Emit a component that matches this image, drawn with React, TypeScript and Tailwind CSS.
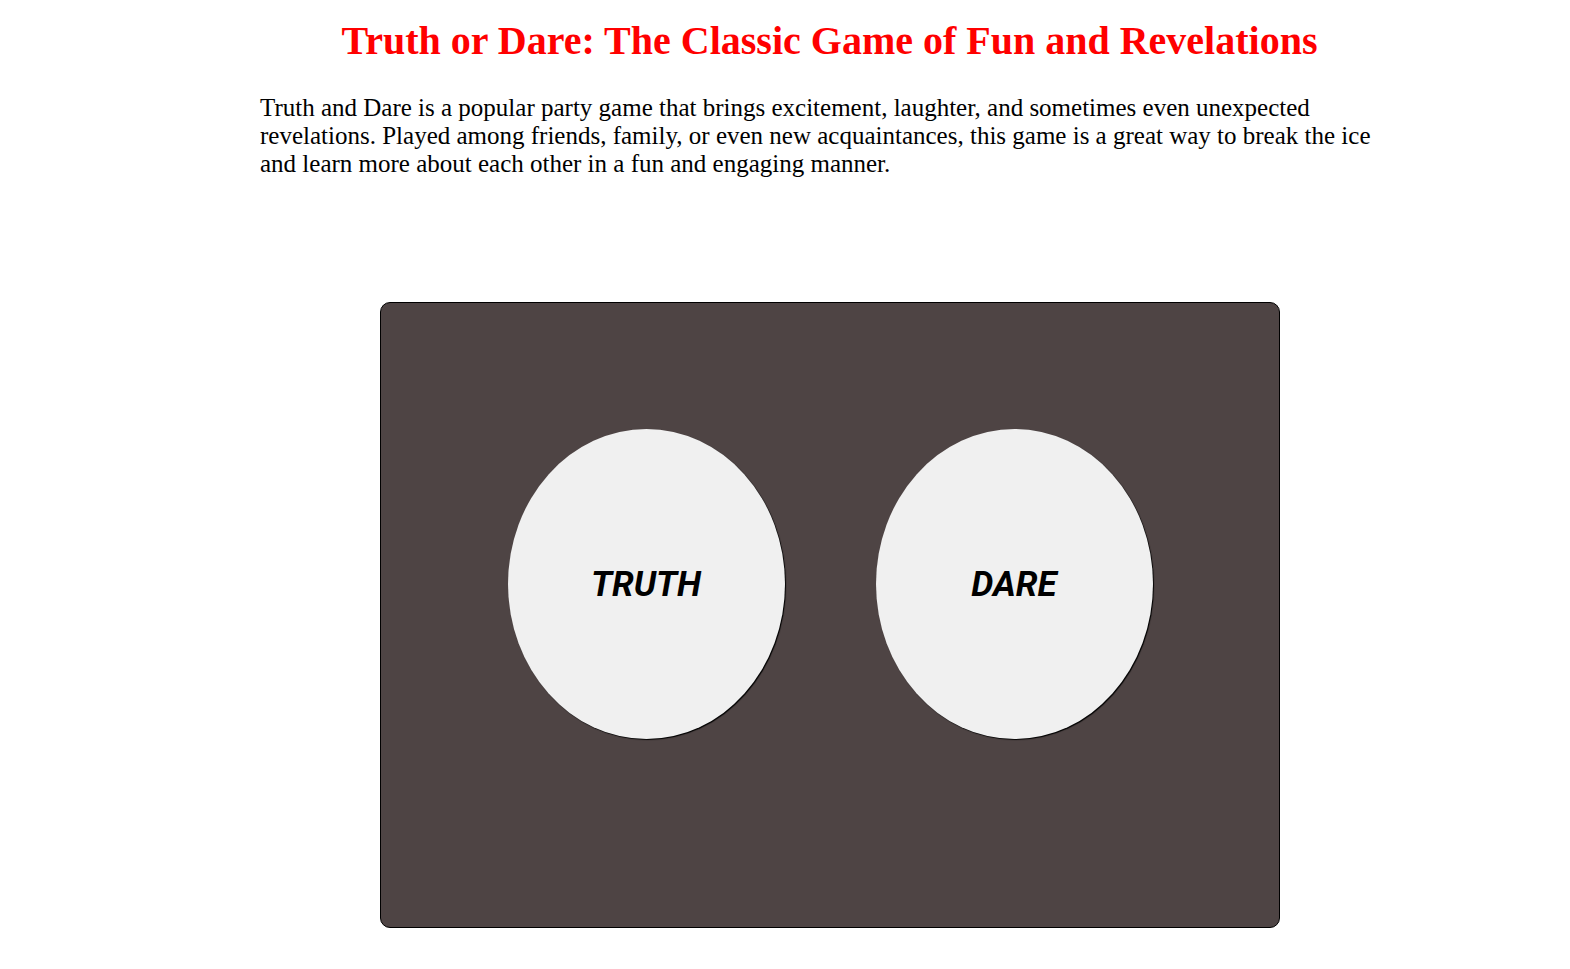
export default function App() {
  return (
    <main className="min-h-screen bg-white" style={{ fontFamily: "'Liberation Serif', 'Times New Roman', serif" }}>
      <div className="ml-[260px] w-[1139px] pt-[18px]">
        <h1 className="text-center text-[40px] font-bold leading-[46px] text-[#ff0000]">
          Truth or Dare: The Classic Game of Fun and Revelations
        </h1>
        <p className="mt-[30px] pr-[15px] text-[25px] leading-[28px] text-black">
          Truth and Dare is a popular party game that brings excitement, laughter, and sometimes even unexpected
          revelations. Played among friends, family, or even new acquaintances, this game is a great way to break the ice
          and learn more about each other in a fun and engaging manner.
        </p>
      </div>

      <div className="ml-[380px] mt-[124px] flex h-[626px] w-[900px] items-start justify-center gap-[91px] rounded-[10px] border border-black bg-[#4e4444] pt-[126px]">
        {["TRUTH", "DARE"].map((label) => (
          <button
            key={label}
            className="flex h-[310px] w-[277px] items-center justify-center rounded-[50%] bg-[#f0f0f0] shadow-[1px_1px_1px_#000]"
          >
            <span
              className="pt-[2px] text-[35px] font-bold italic text-black"
              style={{ fontFamily: "Roboto, 'Liberation Sans', sans-serif" }}
            >
              {label}
            </span>
          </button>
        ))}
      </div>
    </main>
  );
}
